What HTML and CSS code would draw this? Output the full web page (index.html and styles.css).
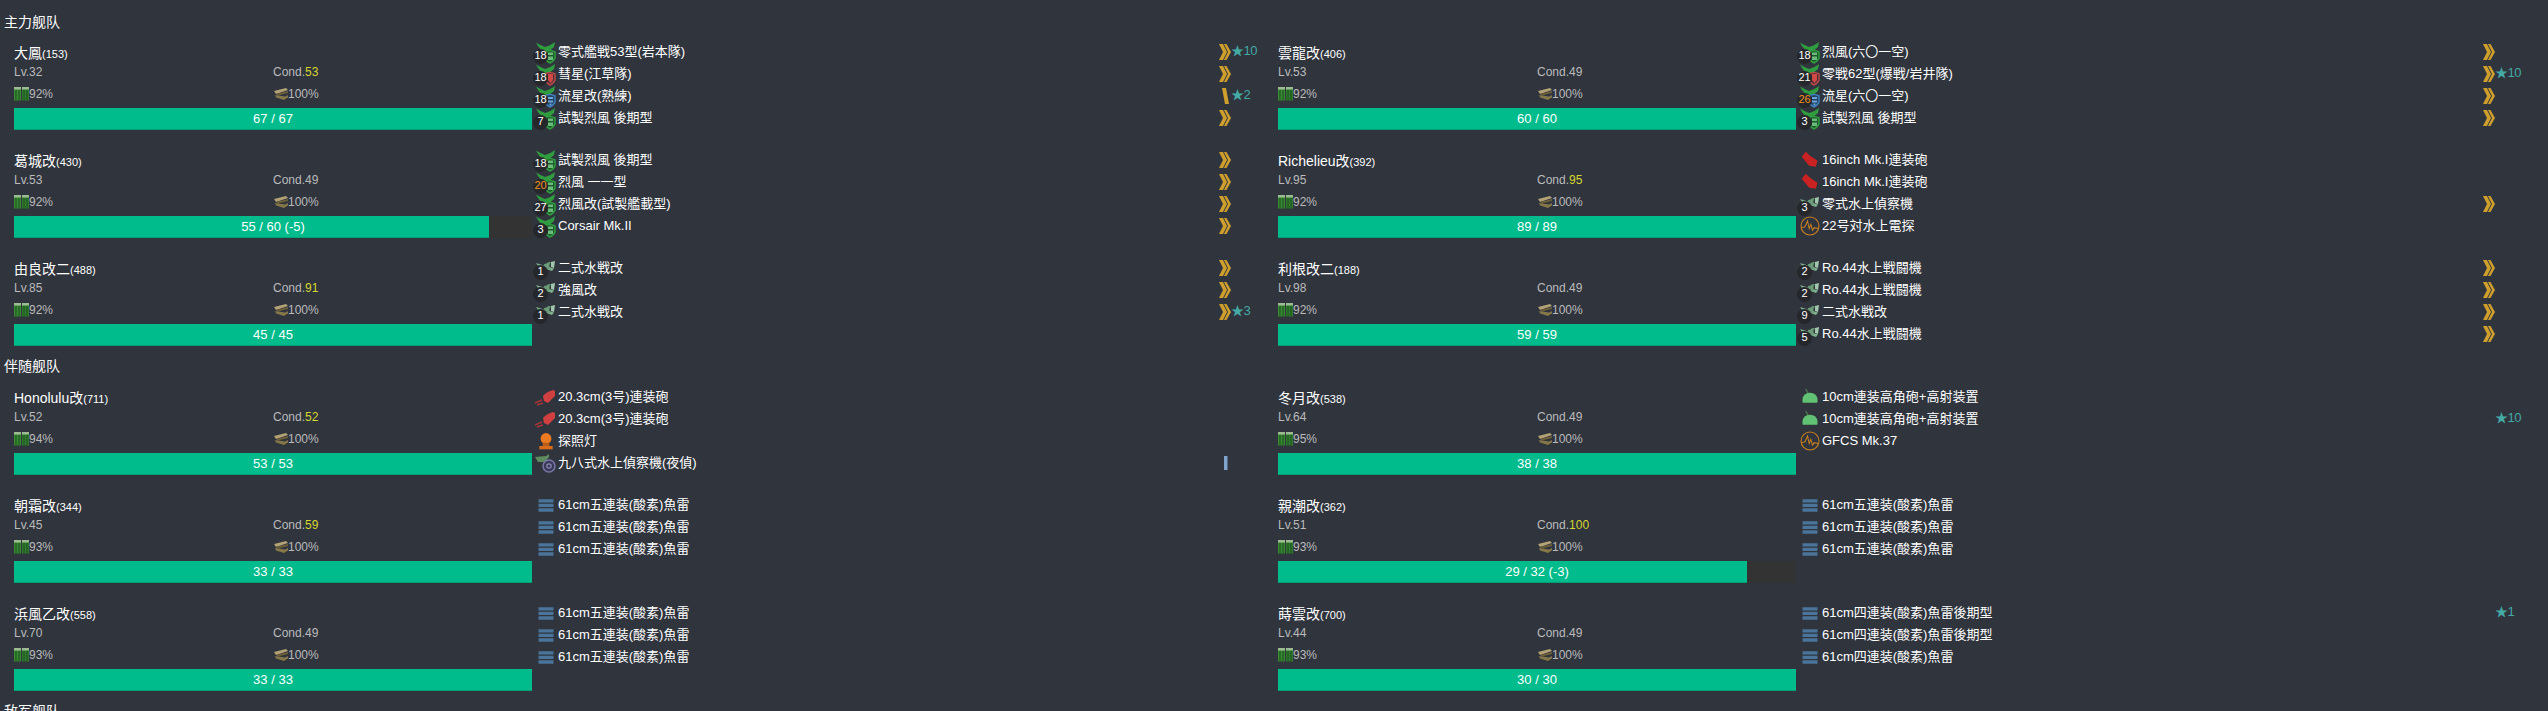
FILE: index.html
```html
<!DOCTYPE html>
<html lang="zh">

<head>
    <meta charset="UTF-8">
    <title>舰队</title>
    <link rel="stylesheet" href="styles.css">
</head>

<body>
    <svg class="defs" width="0" height="0">
        <symbol id="fuel" viewBox="0 0 15 14">
            <path d="M0 1.500h7v12H0z" fill="#3a8a35" />
            <path d="M8 1.500h7v12H8z" fill="#327a2e" />
            <path d="M0 0h7v2.500H0zM8 0h7v2.500H8z" fill="#9dbb92" />
            <path d="M1.500 3h1v10.500h-1zM4.500 3h1v10.500h-1zM9.500 3h1v10.500h-1zM12.500 3h1v10.500h-1z" fill="#174f1a" />
        </symbol>
        <symbol id="ammo" viewBox="0 0 15 12">
            <path d="M1 3 13 0l2 2L3 6z" fill="#b3a274" />
            <path d="M3 6l12-3v2L5 7.500z" fill="#6b5f3c" />
            <path d="M2 7l10 1.500L15 7v2.500L11 12 3 9.500z" fill="#857748" />
            <path d="M3 9.500 11 12l4-2.500v1L11 12z" fill="#3e3826" />
        </symbol>
        <symbol id="plane" viewBox="0 0 24 24">
            <path d="M4 .500q5 3 9 4.500 5-1 10-5l-1 5q-3 3.500-8 5-6-1-10-9.500z" fill="#2f9d3f" />
        </symbol>
        <symbol id="fighter" viewBox="0 0 24 24">
            <use href="#plane" width="24" height="24" />
            <path d="M13 10q5-3 10 0v6q-1 3-5 5-4-2-5-5z" fill="#1c5a2b" stroke="#2f9d3f" stroke-width="1.500" />
            <path d="M16 10.500h5v2.500h-5zM16 14.500h5v3.500h-5z" fill="#6dbb7c" />
        </symbol>
        <symbol id="bomber" viewBox="0 0 24 24">
            <use href="#plane" width="24" height="24" />
            <path d="M13 10q5-3 10 0v6q-1 3-5 5-4-2-5-5z" fill="#4d2e33" stroke="#b84a4a" stroke-width="1.500" />
            <path d="M16 10h5v6l-2.500 3-2.500-3z" fill="#d04848" />
        </symbol>
        <symbol id="attacker" viewBox="0 0 24 24">
            <use href="#plane" width="24" height="24" />
            <path d="M13 10q5-3 10 0v6q-1 3-5 5-4-2-5-5z" fill="#23405f" stroke="#3f80bf" stroke-width="1.500" />
            <path d="M16 11h5v2h-5zM16 14.500h5v2h-5zM17.500 17.500h2v2h-2z" fill="#6aa5dc" />
        </symbol>
        <symbol id="seaplane" viewBox="0 0 24 24">
            <path d="M4 5l18 5.500-2 2.500L6 8z" fill="#7eb08c" />
            <path d="M9 13l7-9h3l-4 7z" fill="#5f8f6c" />
            <path d="M12 6l5-1 1 6-5 1z" fill="#6c9c79" />
            <path d="M19 4l4-1-1 7-3-1z" fill="#a3c7ad" />
        </symbol>
        <symbol id="big-gun" viewBox="0 0 24 24">
            <path d="M2 8l5-6 5 5 9 6-2 7-8-1z" fill="#c92222" />
        </symbol>
        <symbol id="mid-gun" viewBox="0 0 24 24">
            <path d="M11 9q3-4 10-6l2 1v5l-7 7-4-2z" fill="#d04040" />
            <path d="M10 13 3 16M11 16l-6 2" fill="none" stroke="#a83636" stroke-width="1.500" />
        </symbol>
        <symbol id="aa-gun" viewBox="0 0 24 24">
            <path d="M6 2h1.500l4 7h-2z" fill="#4a7a52" />
            <path d="M3 18v-3q1-8 9-8t9 8v3q0 1-1 1H4q-1 0-1-1z" fill="#62c274" />
        </symbol>
        <symbol id="light" viewBox="0 0 24 24">
            <circle cx="12" cy="9" r="6.500" fill="#ec7a20" />
            <path d="M8 14h8v4H8z" fill="#b85e1a" />
            <path d="M4 18h16v4H4z" fill="#d96c1c" />
        </symbol>
        <symbol id="recon" viewBox="0 0 24 24">
            <path d="M3 4l11-1 3-2v3l-4 5-7 0z" fill="#5d8a5f" />
            <circle cx="17" cy="13" r="6" fill="#3a3a56" stroke="#7a76a8" stroke-width="1.500" />
            <circle cx="17" cy="13" r="2.200" fill="none" stroke="#8c88b8" stroke-width="1.200" />
        </symbol>
        <symbol id="radar" viewBox="0 0 24 24">
            <circle cx="12" cy="12" r="10.800" fill="none" stroke="#c47f22" stroke-width="1.300" />
            <path d="M2 14l4-1 3-7 2 9 2-5 2 7 2-3 5 1" fill="none" stroke="#c47f22" stroke-width="1.300" />
        </symbol>
        <symbol id="torpedo" viewBox="0 0 24 24">
            <path d="M3 5h18v4H3zM3 10.500h18v4H3zM3 16h18v4H3z" fill="#4a7499" />
        </symbol>
        <symbol id="chevron" viewBox="0 0 12 16">
            <path d="M0 0h4l4 8-4 8H0l4-8zM5 0h2.500L12 8l-4.500 8H5l4-8z" fill="#cf9f2d" />
        </symbol>
        <symbol id="slash" viewBox="0 0 12 16">
            <path d="M3 0h4l3 16H6z" fill="#cf9f2d" />
        </symbol>
        <symbol id="blue-bar" viewBox="0 0 12 16">
            <path d="M5 1h3.500v14H5z" fill="#7fa3cc" />
        </symbol>
    </svg>

    <h2 class="fleet-title fleet-first">主力舰队</h2>
    <div class="fleet">
        <div class="ship">
            <div class="ship-info">
                <div class="ship-name">大鳳<small>(153)</small></div>
                <div class="ship-stats"><span>Lv.32</span><span>Cond.<b>53</b></span></div>
                <div class="ship-stats"><span><svg class="res"><use href="#fuel" /></svg>92%</span><span><svg class="res"><use href="#ammo" /></svg>100%</span></div>
                <div class="hp"><div class="hp-fill" style="width: 100%"></div><div class="hp-text">67 / 67</div></div>
            </div>
            <ul class="slots">
                <li><span class="slot-icon"><svg class="air"><use href="#fighter" /></svg><i>18</i></span><span class="slot-name">零式艦戦53型(岩本隊)</span><svg class="prof"><use href="#chevron" /></svg><span class="star">★10</span></li>
                <li><span class="slot-icon"><svg class="air"><use href="#bomber" /></svg><i>18</i></span><span class="slot-name">彗星(江草隊)</span><svg class="prof"><use href="#chevron" /></svg><span class="star"></span></li>
                <li><span class="slot-icon"><svg class="air"><use href="#attacker" /></svg><i>18</i></span><span class="slot-name">流星改(熟練)</span><svg class="prof"><use href="#slash" /></svg><span class="star">★2</span></li>
                <li><span class="slot-icon"><svg class="air"><use href="#fighter" /></svg><i>7</i></span><span class="slot-name">試製烈風 後期型</span><svg class="prof"><use href="#chevron" /></svg><span class="star"></span></li>
            </ul>
        </div>
        <div class="ship">
            <div class="ship-info">
                <div class="ship-name">雲龍改<small>(406)</small></div>
                <div class="ship-stats"><span>Lv.53</span><span>Cond.49</span></div>
                <div class="ship-stats"><span><svg class="res"><use href="#fuel" /></svg>92%</span><span><svg class="res"><use href="#ammo" /></svg>100%</span></div>
                <div class="hp"><div class="hp-fill" style="width: 100%"></div><div class="hp-text">60 / 60</div></div>
            </div>
            <ul class="slots">
                <li><span class="slot-icon"><svg class="air"><use href="#fighter" /></svg><i>18</i></span><span class="slot-name">烈風(六〇一空)</span><svg class="prof"><use href="#chevron" /></svg><span class="star"></span></li>
                <li><span class="slot-icon"><svg class="air"><use href="#bomber" /></svg><i>21</i></span><span class="slot-name">零戦62型(爆戦/岩井隊)</span><svg class="prof"><use href="#chevron" /></svg><span class="star">★10</span></li>
                <li><span class="slot-icon"><svg class="air"><use href="#attacker" /></svg><i class="warn">26</i></span><span class="slot-name">流星(六〇一空)</span><svg class="prof"><use href="#chevron" /></svg><span class="star"></span></li>
                <li><span class="slot-icon"><svg class="air"><use href="#fighter" /></svg><i>3</i></span><span class="slot-name">試製烈風 後期型</span><svg class="prof"><use href="#chevron" /></svg><span class="star"></span></li>
            </ul>
        </div>
        <div class="ship">
            <div class="ship-info">
                <div class="ship-name">葛城改<small>(430)</small></div>
                <div class="ship-stats"><span>Lv.53</span><span>Cond.49</span></div>
                <div class="ship-stats"><span><svg class="res"><use href="#fuel" /></svg>92%</span><span><svg class="res"><use href="#ammo" /></svg>100%</span></div>
                <div class="hp"><div class="hp-fill" style="width: 91.67%"></div><div class="hp-text">55 / 60 (-5)</div></div>
            </div>
            <ul class="slots">
                <li><span class="slot-icon"><svg class="air"><use href="#fighter" /></svg><i>18</i></span><span class="slot-name">試製烈風 後期型</span><svg class="prof"><use href="#chevron" /></svg><span class="star"></span></li>
                <li><span class="slot-icon"><svg class="air"><use href="#fighter" /></svg><i class="warn">20</i></span><span class="slot-name">烈風 一一型</span><svg class="prof"><use href="#chevron" /></svg><span class="star"></span></li>
                <li><span class="slot-icon"><svg class="air"><use href="#fighter" /></svg><i>27</i></span><span class="slot-name">烈風改(試製艦載型)</span><svg class="prof"><use href="#chevron" /></svg><span class="star"></span></li>
                <li><span class="slot-icon"><svg class="air"><use href="#fighter" /></svg><i>3</i></span><span class="slot-name">Corsair Mk.II</span><svg class="prof"><use href="#chevron" /></svg><span class="star"></span></li>
            </ul>
        </div>
        <div class="ship">
            <div class="ship-info">
                <div class="ship-name">Richelieu改<small>(392)</small></div>
                <div class="ship-stats"><span>Lv.95</span><span>Cond.<b>95</b></span></div>
                <div class="ship-stats"><span><svg class="res"><use href="#fuel" /></svg>92%</span><span><svg class="res"><use href="#ammo" /></svg>100%</span></div>
                <div class="hp"><div class="hp-fill" style="width: 100%"></div><div class="hp-text">89 / 89</div></div>
            </div>
            <ul class="slots">
                <li><span class="slot-icon"><svg class="gear"><use href="#big-gun" /></svg></span><span class="slot-name">16inch Mk.I連装砲</span></li>
                <li><span class="slot-icon"><svg class="gear"><use href="#big-gun" /></svg></span><span class="slot-name">16inch Mk.I連装砲</span></li>
                <li><span class="slot-icon"><svg class="air"><use href="#seaplane" /></svg><i>3</i></span><span class="slot-name">零式水上偵察機</span><svg class="prof"><use href="#chevron" /></svg><span class="star"></span></li>
                <li><span class="slot-icon"><svg class="gear"><use href="#radar" /></svg></span><span class="slot-name">22号対水上電探</span></li>
            </ul>
        </div>
        <div class="ship">
            <div class="ship-info">
                <div class="ship-name">由良改二<small>(488)</small></div>
                <div class="ship-stats"><span>Lv.85</span><span>Cond.<b>91</b></span></div>
                <div class="ship-stats"><span><svg class="res"><use href="#fuel" /></svg>92%</span><span><svg class="res"><use href="#ammo" /></svg>100%</span></div>
                <div class="hp"><div class="hp-fill" style="width: 100%"></div><div class="hp-text">45 / 45</div></div>
            </div>
            <ul class="slots">
                <li><span class="slot-icon"><svg class="air"><use href="#seaplane" /></svg><i>1</i></span><span class="slot-name">二式水戦改</span><svg class="prof"><use href="#chevron" /></svg><span class="star"></span></li>
                <li><span class="slot-icon"><svg class="air"><use href="#seaplane" /></svg><i>2</i></span><span class="slot-name">強風改</span><svg class="prof"><use href="#chevron" /></svg><span class="star"></span></li>
                <li><span class="slot-icon"><svg class="air"><use href="#seaplane" /></svg><i>1</i></span><span class="slot-name">二式水戦改</span><svg class="prof"><use href="#chevron" /></svg><span class="star">★3</span></li>
            </ul>
        </div>
        <div class="ship">
            <div class="ship-info">
                <div class="ship-name">利根改二<small>(188)</small></div>
                <div class="ship-stats"><span>Lv.98</span><span>Cond.49</span></div>
                <div class="ship-stats"><span><svg class="res"><use href="#fuel" /></svg>92%</span><span><svg class="res"><use href="#ammo" /></svg>100%</span></div>
                <div class="hp"><div class="hp-fill" style="width: 100%"></div><div class="hp-text">59 / 59</div></div>
            </div>
            <ul class="slots">
                <li><span class="slot-icon"><svg class="air"><use href="#seaplane" /></svg><i>2</i></span><span class="slot-name">Ro.44水上戦闘機</span><svg class="prof"><use href="#chevron" /></svg><span class="star"></span></li>
                <li><span class="slot-icon"><svg class="air"><use href="#seaplane" /></svg><i>2</i></span><span class="slot-name">Ro.44水上戦闘機</span><svg class="prof"><use href="#chevron" /></svg><span class="star"></span></li>
                <li><span class="slot-icon"><svg class="air"><use href="#seaplane" /></svg><i>9</i></span><span class="slot-name">二式水戦改</span><svg class="prof"><use href="#chevron" /></svg><span class="star"></span></li>
                <li><span class="slot-icon"><svg class="air"><use href="#seaplane" /></svg><i>5</i></span><span class="slot-name">Ro.44水上戦闘機</span><svg class="prof"><use href="#chevron" /></svg><span class="star"></span></li>
            </ul>
        </div>
    </div>

    <h2 class="fleet-title">伴随舰队</h2>
    <div class="fleet">
        <div class="ship">
            <div class="ship-info">
                <div class="ship-name">Honolulu改<small>(711)</small></div>
                <div class="ship-stats"><span>Lv.52</span><span>Cond.<b>52</b></span></div>
                <div class="ship-stats"><span><svg class="res"><use href="#fuel" /></svg>94%</span><span><svg class="res"><use href="#ammo" /></svg>100%</span></div>
                <div class="hp"><div class="hp-fill" style="width: 100%"></div><div class="hp-text">53 / 53</div></div>
            </div>
            <ul class="slots">
                <li><span class="slot-icon"><svg class="air"><use href="#mid-gun" /></svg></span><span class="slot-name">20.3cm(3号)連装砲</span></li>
                <li><span class="slot-icon"><svg class="air"><use href="#mid-gun" /></svg></span><span class="slot-name">20.3cm(3号)連装砲</span></li>
                <li><span class="slot-icon"><svg class="gear"><use href="#light" /></svg></span><span class="slot-name">探照灯</span></li>
                <li><span class="slot-icon"><svg class="air"><use href="#recon" /></svg></span><span class="slot-name">九八式水上偵察機(夜偵)</span><svg class="prof"><use href="#blue-bar" /></svg><span class="star"></span></li>
            </ul>
        </div>
        <div class="ship">
            <div class="ship-info">
                <div class="ship-name">冬月改<small>(538)</small></div>
                <div class="ship-stats"><span>Lv.64</span><span>Cond.49</span></div>
                <div class="ship-stats"><span><svg class="res"><use href="#fuel" /></svg>95%</span><span><svg class="res"><use href="#ammo" /></svg>100%</span></div>
                <div class="hp"><div class="hp-fill" style="width: 100%"></div><div class="hp-text">38 / 38</div></div>
            </div>
            <ul class="slots">
                <li><span class="slot-icon"><svg class="gear"><use href="#aa-gun" /></svg></span><span class="slot-name">10cm連装高角砲+高射装置</span></li>
                <li><span class="slot-icon"><svg class="gear"><use href="#aa-gun" /></svg></span><span class="slot-name">10cm連装高角砲+高射装置</span><span class="prof"></span><span class="star">★10</span></li>
                <li><span class="slot-icon"><svg class="gear"><use href="#radar" /></svg></span><span class="slot-name">GFCS Mk.37</span></li>
            </ul>
        </div>
        <div class="ship">
            <div class="ship-info">
                <div class="ship-name">朝霜改<small>(344)</small></div>
                <div class="ship-stats"><span>Lv.45</span><span>Cond.<b>59</b></span></div>
                <div class="ship-stats"><span><svg class="res"><use href="#fuel" /></svg>93%</span><span><svg class="res"><use href="#ammo" /></svg>100%</span></div>
                <div class="hp"><div class="hp-fill" style="width: 100%"></div><div class="hp-text">33 / 33</div></div>
            </div>
            <ul class="slots">
                <li><span class="slot-icon"><svg class="gear"><use href="#torpedo" /></svg></span><span class="slot-name">61cm五連装(酸素)魚雷</span></li>
                <li><span class="slot-icon"><svg class="gear"><use href="#torpedo" /></svg></span><span class="slot-name">61cm五連装(酸素)魚雷</span></li>
                <li><span class="slot-icon"><svg class="gear"><use href="#torpedo" /></svg></span><span class="slot-name">61cm五連装(酸素)魚雷</span></li>
            </ul>
        </div>
        <div class="ship">
            <div class="ship-info">
                <div class="ship-name">親潮改<small>(362)</small></div>
                <div class="ship-stats"><span>Lv.51</span><span>Cond.<b>100</b></span></div>
                <div class="ship-stats"><span><svg class="res"><use href="#fuel" /></svg>93%</span><span><svg class="res"><use href="#ammo" /></svg>100%</span></div>
                <div class="hp"><div class="hp-fill" style="width: 90.63%"></div><div class="hp-text">29 / 32 (-3)</div></div>
            </div>
            <ul class="slots">
                <li><span class="slot-icon"><svg class="gear"><use href="#torpedo" /></svg></span><span class="slot-name">61cm五連装(酸素)魚雷</span></li>
                <li><span class="slot-icon"><svg class="gear"><use href="#torpedo" /></svg></span><span class="slot-name">61cm五連装(酸素)魚雷</span></li>
                <li><span class="slot-icon"><svg class="gear"><use href="#torpedo" /></svg></span><span class="slot-name">61cm五連装(酸素)魚雷</span></li>
            </ul>
        </div>
        <div class="ship">
            <div class="ship-info">
                <div class="ship-name">浜風乙改<small>(558)</small></div>
                <div class="ship-stats"><span>Lv.70</span><span>Cond.49</span></div>
                <div class="ship-stats"><span><svg class="res"><use href="#fuel" /></svg>93%</span><span><svg class="res"><use href="#ammo" /></svg>100%</span></div>
                <div class="hp"><div class="hp-fill" style="width: 100%"></div><div class="hp-text">33 / 33</div></div>
            </div>
            <ul class="slots">
                <li><span class="slot-icon"><svg class="gear"><use href="#torpedo" /></svg></span><span class="slot-name">61cm五連装(酸素)魚雷</span></li>
                <li><span class="slot-icon"><svg class="gear"><use href="#torpedo" /></svg></span><span class="slot-name">61cm五連装(酸素)魚雷</span></li>
                <li><span class="slot-icon"><svg class="gear"><use href="#torpedo" /></svg></span><span class="slot-name">61cm五連装(酸素)魚雷</span></li>
            </ul>
        </div>
        <div class="ship">
            <div class="ship-info">
                <div class="ship-name">蒔雲改<small>(700)</small></div>
                <div class="ship-stats"><span>Lv.44</span><span>Cond.49</span></div>
                <div class="ship-stats"><span><svg class="res"><use href="#fuel" /></svg>93%</span><span><svg class="res"><use href="#ammo" /></svg>100%</span></div>
                <div class="hp"><div class="hp-fill" style="width: 100%"></div><div class="hp-text">30 / 30</div></div>
            </div>
            <ul class="slots">
                <li><span class="slot-icon"><svg class="gear"><use href="#torpedo" /></svg></span><span class="slot-name">61cm四連装(酸素)魚雷後期型</span><span class="prof"></span><span class="star">★1</span></li>
                <li><span class="slot-icon"><svg class="gear"><use href="#torpedo" /></svg></span><span class="slot-name">61cm四連装(酸素)魚雷後期型</span></li>
                <li><span class="slot-icon"><svg class="gear"><use href="#torpedo" /></svg></span><span class="slot-name">61cm四連装(酸素)魚雷</span></li>
            </ul>
        </div>
    </div>

    <h2 class="fleet-title">敌军舰队</h2>
</body>

</html>
```
FILE: styles.css
```css
html {
    overflow: hidden;
}

body {
    margin: 0;
    padding: 0 0 0 4px;
    background-color: #2f343d;
    color: #fff;
    font-family: "Liberation Sans", "Noto Sans CJK JP", sans-serif;
    font-size: 13px;
}

.defs {
    position: absolute;
}

.fleet-title {
    margin: 0;
    height: 41px;
    padding-top: 10px;
    box-sizing: border-box;
    font-size: 14px;
    font-weight: normal;
    line-height: 20px;
}

.fleet-first {
    height: 42px;
    padding-top: 12px;
}

.fleet {
    display: grid;
    grid-template-columns: 1264px 1264px;
    row-gap: 20px;
    padding-left: 10px;
}

.ship {
    display: flex;
    height: 88px;
}

.ship-info {
    flex: none;
    width: 518px;
}

.ship-name {
    height: 22px;
    font-size: 14px;
    line-height: 22px;
}

.ship-name small {
    font-size: 11px;
}

.ship-stats {
    display: grid;
    grid-template-columns: 1fr 1fr;
    height: 22px;
    color: #bbb;
    font-size: 12px;
    line-height: 16px;
}

.ship-stats b {
    color: #d6d62f;
    font-weight: normal;
}

.res {
    width: 15px;
    height: 14px;
    vertical-align: -3px;
}

.hp {
    display: grid;
    height: 22px;
    background-color: #333;
}

.hp-fill,
.hp-text {
    grid-area: 1 / 1;
}

.hp-fill {
    background-color: #00bc8c;
    box-shadow: inset 0 -1px 0 rgba(0, 0, 0, 0.15);
}

.hp-text {
    text-align: center;
    line-height: 21px;
}

.slots {
    flex: 1;
    margin: 0;
    padding: 0;
    list-style: none;
}

.slots li {
    display: flex;
    height: 22px;
    line-height: 20px;
}

.slot-icon {
    position: relative;
    flex: none;
    width: 26px;
}

.slot-icon .air {
    position: absolute;
    left: 0;
    top: 0;
    width: 24px;
    height: 24px;
}

.slot-icon .gear {
    position: absolute;
    left: 4px;
    top: 0;
    width: 20px;
    height: 20px;
}

.slot-icon i {
    position: absolute;
    left: 1px;
    top: 7px;
    width: 15px;
    height: 15px;
    border-radius: 50%;
    background-color: #26272b;
    font-size: 11px;
    font-style: normal;
    line-height: 12px;
    text-align: center;
}

.slot-icon .warn {
    color: #f0931e;
}

.slot-name {
    flex: 1;
    white-space: nowrap;
}

.prof {
    flex: none;
    width: 12px;
    height: 16px;
    margin-top: 2px;
}

.star {
    flex: none;
    width: 47px;
    color: #45a9a5;
    line-height: 18px;
    letter-spacing: -0.5px;
}
```
